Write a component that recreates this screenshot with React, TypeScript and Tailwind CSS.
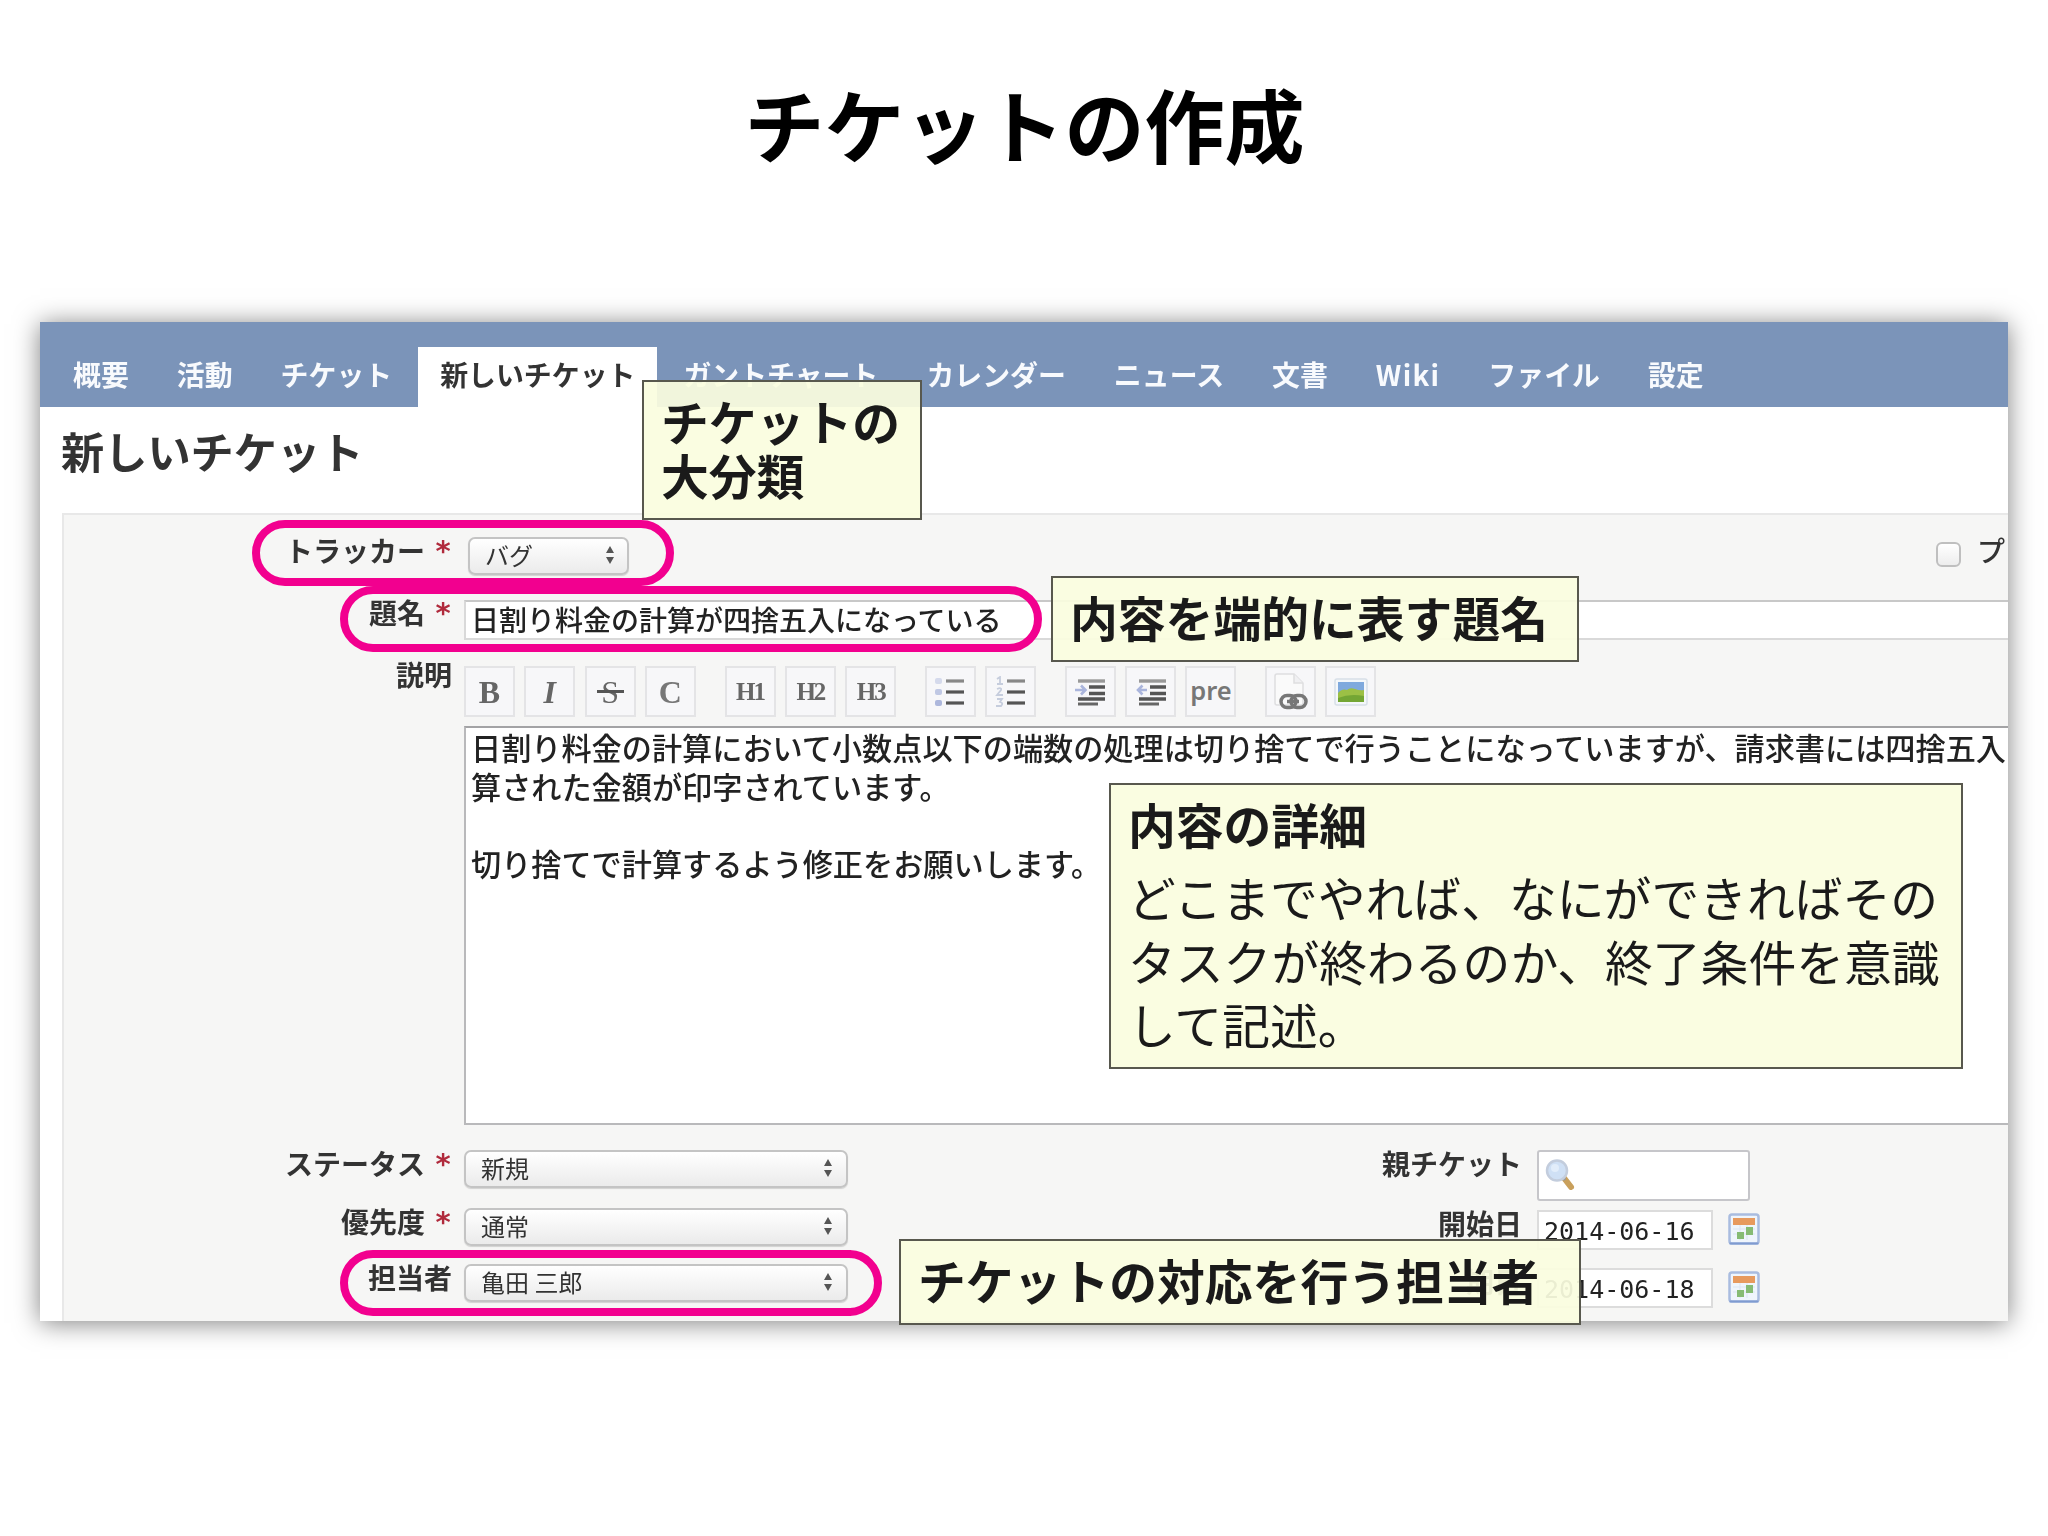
import React from "react";

type Children = { children?: React.ReactNode };

const tabs = [
  "概要",
  "活動",
  "チケット",
  "新しいチケット",
  "ガントチャート",
  "カレンダー",
  "ニュース",
  "文書",
  "Wiki",
  "ファイル",
  "設定",
];

function Label({ text, required, className = "" }: { text: string; required?: boolean; className?: string }) {
  return (
    <div
      className={`flex h-7 shrink-0 justify-end whitespace-nowrap text-[28px] leading-7 font-bold text-[#333] ${className}`}
    >
      {text}
      {required && (
        <span className="ml-[9px] w-[18px] pt-[1px] text-center font-['DejaVu_Sans'] text-[29px] font-bold text-[#b02a3c]">
          *
        </span>
      )}
    </div>
  );
}

function Select({ value, className = "" }: { value: string; className?: string }) {
  return (
    <div
      className={`flex h-[38px] shrink-0 items-center justify-between rounded-[7px] border-2 border-[#c4c4c4] bg-linear-to-b from-white to-[#ebebeb] pb-[2px] pl-[15px] text-[24px] leading-none text-[#333] shadow-[0_1px_1px_rgba(0,0,0,0.15)] ${className}`}
    >
      <span className="whitespace-pre">{value}</span>
      <svg width="10" height="18" viewBox="0 0 10 18" fill="#555">
        <path d="M5 0 9 7H1zM5 18 1 11h8z" />
      </svg>
    </div>
  );
}

function Tool({ children }: Children) {
  return (
    <div className="flex size-[51px] items-center justify-center border-2 border-[#e4e4e6] bg-[#f7f7f9] font-['Liberation_Serif'] text-[27px] leading-none text-[#555]">
      {children}
    </div>
  );
}

function ListLines() {
  return (
    <g stroke="#555" strokeWidth="3.2">
      <path d="M12 5h18" stroke="#888" />
      <path d="M12 16h18" />
      <path d="M12 27h18" />
    </g>
  );
}

function BulletList() {
  return (
    <svg width="32" height="32" viewBox="0 0 32 32">
      <ListLines />
      <g fill="#d5daec">
        <rect x="1" y="2" width="7" height="6" rx="2" />
        <rect x="1" y="13" width="7" height="6" rx="2" fill="#c0c8e4" />
        <rect x="1" y="24" width="7" height="6" rx="2" fill="#adb7dc" />
      </g>
    </svg>
  );
}

function NumberList() {
  return (
    <svg width="32" height="32" viewBox="0 0 32 32">
      <ListLines />
      <g fill="none" stroke="#c6cddd" strokeWidth="1.8">
        <path d="M2 3l3-2v7M2 8h6" />
        <path d="M2 13q5-2 4 1l-4 5h6" />
        <path d="M2 23h5l-2 3q4 1 1 4H1" />
      </g>
    </svg>
  );
}

function Indent({ out }: { out?: boolean }) {
  return (
    <svg width="30" height="28" viewBox="0 0 30 28">
      <path d="M3 3h27" stroke="#999" strokeWidth="3.4" />
      <path d="M14 9h16M14 15.500h16M3 21h27" stroke="#555" strokeWidth="3.400" />
      <path d="M3 26h20" stroke="#666" strokeWidth="3" />
      <path
        d={out ? "M11 12H2M6.500 7.500 2 12l4.500 4.500" : "M0 12h10M6 7.500 10.500 12 6 16.500"}
        stroke="#aab5dc"
        strokeWidth="2.600"
        fill="none"
      />
    </svg>
  );
}

function LinkIcon() {
  return (
    <svg width="36" height="38" viewBox="0 0 36 38" fill="none">
      <path d="M2 3q0-2 2-2h17l9 9v20q0 2-2 2H4q-2 0-2-2z" fill="#fafafa" stroke="#dedee0" strokeWidth="1.500" />
      <path d="M21 1v9h9" fill="#f0f0f2" stroke="#dedee0" strokeWidth="1.500" />
      <rect x="8" y="22.500" width="15" height="12" rx="6" stroke="#777" strokeWidth="3.500" />
      <rect x="18" y="22.500" width="15" height="12" rx="6" stroke="#777" strokeWidth="3.500" />
      <path d="M14 28.500h12" stroke="#777" strokeWidth="3.500" />
    </svg>
  );
}

function ImageIcon() {
  return (
    <svg width="34" height="28" viewBox="0 0 34 28">
      <rect x="1" y="1" width="32" height="26" rx="2" fill="#f4f7fa" stroke="#d8e0e8" strokeWidth="1.500" />
      <rect x="4" y="4" width="26" height="20" fill="#7fa9dd" />
      <path d="M4 15q4-5 9-3 3-3 8-1 5 2 9 1v12H4z" fill="#9cc045" />
      <path d="M4 20q12-5 26-2v6H4z" fill="#74a634" />
    </svg>
  );
}

function SearchIcon() {
  return (
    <svg width="30" height="31" viewBox="0 0 30 31">
      <path d="m19 19 7 9" stroke="#c9a05c" strokeWidth="6" strokeLinecap="round" />
      <path d="m17 17 3 4" stroke="#999" strokeWidth="3" />
      <circle cx="12" cy="11.500" r="10" fill="#cfe0f5" stroke="#c3cddd" strokeWidth="2.500" />
      <circle cx="10" cy="9" r="4" fill="#e2edfa" />
    </svg>
  );
}

function CalendarIcon({ className = "" }: { className?: string }) {
  return (
    <svg className={`shrink-0 ${className}`} width="32" height="32" viewBox="0 0 32 32">
      <rect x="1.500" y="1.500" width="29" height="29" rx="2.500" fill="#eff5fc" stroke="#a9bcdf" strokeWidth="2.500" />
      <path d="M1.500 30.500h29" stroke="#7f9bd0" strokeWidth="2" />
      <rect x="5" y="5" width="22" height="7" fill="#e79a5e" />
      <path d="M5 16h22M5 21h22M12 12v15M19 12v15" stroke="#dbe5f2" strokeWidth="1" />
      <rect x="9" y="19" width="7" height="7" fill="#86bb74" />
      <rect x="18" y="14" width="7" height="8" fill="#86bb74" />
    </svg>
  );
}

function DateField({ value }: { value: string }) {
  return (
    <>
      <div className="ml-[15px] flex h-10 w-[176px] items-center border-2 border-[#dcdcdc] bg-white pt-[2px] pl-[5px] font-['DejaVu_Sans_Mono'] text-[25px] leading-none text-[#222]">
        {value}
      </div>
      <CalendarIcon className="mt-[3px] ml-[15px]" />
    </>
  );
}

function Ring({ className = "" }: { className?: string }) {
  return <div className={`absolute h-[66px] rounded-[33px] border-8 border-[#f2008f] ${className}`} />;
}

function Callout({ className = "", children }: Children & { className?: string }) {
  return (
    <div
      className={`absolute border-2 border-[#58584e] bg-[#fafddf]/[0.93] text-[47.8px] font-bold whitespace-nowrap text-[#1a1a1a] ${className}`}
    >
      {children}
    </div>
  );
}

function Screen() {
  return (
    <div className="h-full overflow-hidden bg-white">
      <nav className="h-[85px] bg-[#7b94b9]">
        <div className="flex h-[85px] items-end gap-1 pl-[11px] text-[27.9px] leading-none font-bold text-[#f8fafd] blur-[0.5px]">
          {tabs.map((tab) => (
            <div
              key={tab}
              className={
                tab === "新しいチケット"
                  ? "h-[60px] bg-white px-[22px] pt-[14px] text-[#333]"
                  : tab === "Wiki"
                    ? "h-[60px] px-[22px] pt-[14px] tracking-[1.3px]"
                    : "h-[60px] px-[22px] pt-[14px]"
              }
            >
              {tab}
            </div>
          ))}
        </div>
      </nav>

      <div className="blur-[0.5px]">
        <h2 className="h-[106px] pt-[20px] pl-[21px] text-[43.2px] leading-[46px] font-bold text-[#333]">
          新しいチケット
        </h2>

        <div className="ml-[22px] h-[820px] w-[2100px] border-2 border-[#e8e8e8] bg-[#f6f6f5]">
          <div className="flex h-[85px] w-[1944px]">
            <Label text="トラッカー" required className="mt-[21px] w-[388px]" />
            <Select value="バグ" className="mt-[22px] ml-[16px] w-[161px] pr-[12px]" />
            <div className="ml-auto flex items-start pt-[27px]">
              <div className="size-[25px] rounded-[6px] border-2 border-[#bfbfbf] bg-linear-to-b from-white to-[#ededed]" />
              <span className="-mt-[6px] ml-[16px] w-[31px] text-[28px] leading-7 font-medium text-[#333]">プ</span>
            </div>
          </div>

          <div className="flex h-[66px]">
            <Label text="題名" required className="-mt-[2px] w-[388px]" />
            <div className="ml-[12px] flex h-[40px] flex-1 items-center border-2 border-[#d9d9d9] border-t-[#c8c8c8] bg-white pb-[3px] pl-[5px] text-[28px] leading-none font-medium text-[#222]">
              日割り料金の計算が四捨五入になっている
            </div>
          </div>

          <div className="flex h-[459px]">
            <Label text="説明" className="-mt-[6px] w-[388px]" />
            <div className="ml-[12px] flex flex-1 flex-col">
              <div className="flex h-[60px] gap-[28.7px]">
                <div className="flex gap-[9.3px]">
                  <Tool>
                    <span className="text-[32px] font-bold text-[#666]">B</span>
                  </Tool>
                  <Tool>
                    <span className="text-[32px] font-bold text-[#666] italic">I</span>
                  </Tool>
                  <Tool>
                    <span className="flex items-center text-[32px] text-[#666]">
                      <span>S</span>
                      <span className="-mr-[5px] -ml-[22px] h-[3px] w-[27px] bg-[#555]" />
                    </span>
                  </Tool>
                  <Tool>
                    <span className="text-[32px] font-bold text-[#777]">C</span>
                  </Tool>
                </div>
                <div className="flex gap-[9.3px]">
                  {["H1", "H2", "H3"].map((h) => (
                    <Tool key={h}>
                      <span className="text-[25px] font-bold tracking-[-2px] text-[#666]">{h}</span>
                    </Tool>
                  ))}
                </div>
                <div className="flex gap-[9.3px]">
                  <Tool>
                    <BulletList />
                  </Tool>
                  <Tool>
                    <NumberList />
                  </Tool>
                </div>
                <div className="flex gap-[9.3px]">
                  <Tool>
                    <Indent />
                  </Tool>
                  <Tool>
                    <Indent out />
                  </Tool>
                  <Tool>
                    <span className="-mt-[2px] font-['Noto_Sans'] text-[25.5px] font-semibold text-[#777]">pre</span>
                  </Tool>
                </div>
                <div className="flex gap-[9.3px]">
                  <Tool>
                    <LinkIcon />
                  </Tool>
                  <Tool>
                    <ImageIcon />
                  </Tool>
                </div>
              </div>
              <div className="flex-1 border-[2.5px] border-[#b9b9bb] border-t-[#a3a3a5] bg-white pl-[5px] text-[30.17px] leading-[38.8px] font-medium whitespace-pre text-[#222]">
                <p>日割り料金の計算において小数点以下の端数の処理は切り捨てで行うことになっていますが、請求書には四捨五入</p>
                <p>算された金額が印字されています。</p>
                <p>&nbsp;</p>
                <p>切り捨てで計算するよう修正をお願いします。</p>
              </div>
            </div>
          </div>

          <div className="flex pt-[25px]">
            <div className="flex w-[784px] flex-col">
              <div className="flex h-[58px]">
                <Label text="ステータス" required className="-mt-[1px] w-[388px]" />
                <Select value="新規" className="ml-[12px] w-[384px] pr-[13px]" />
              </div>
              <div className="flex h-[56px]">
                <Label text="優先度" required className="-mt-[1px] w-[388px]" />
                <Select value="通常" className="ml-[12px] w-[384px] pr-[13px]" />
              </div>
              <div className="flex h-[56px]">
                <Label text="担当者" className="-mt-[1px] w-[388px]" />
                <Select value="亀田 三郎" className="ml-[12px] w-[384px] pr-[13px]" />
              </div>
            </div>
            <div className="flex flex-col">
              <div className="flex h-[60px] items-start">
                <Label text="親チケット" className="-mt-[1px] w-[674px]" />
                <div className="ml-[15px] h-[51px] w-[213px] rounded-[3px] border-[2.5px] border-[#c6c6ca] bg-white pt-[7px] pl-[6px]">
                  <SearchIcon />
                </div>
              </div>
              <div className="flex h-[58px] items-start">
                <Label text="開始日" className="-mt-[1px] w-[674px]" />
                <DateField value="2014-06-16" />
              </div>
              <div className="flex h-[58px] items-start">
                <Label text="期日" className="-mt-[1px] w-[674px]" />
                <DateField value="2014-06-18" />
              </div>
            </div>
          </div>
        </div>
      </div>
    </div>
  );
}

export default function App() {
  return (
    <main className="h-[1536px] w-[2048px] overflow-hidden bg-white font-['Noto_Sans_CJK_JP',sans-serif]">
      <h1 className="h-[322px] pt-[82px] pl-[1px] text-center text-[80px] leading-[80px] font-bold text-black">
        チケットの作成
      </h1>
      <section className="relative ml-[40px] h-[999px] w-[1968px] shadow-[0_2px_24px_rgba(0,0,0,0.5)]">
        <Screen />

        <Ring className="top-[198px] left-[212px] w-[422px]" />
        <Ring className="top-[264px] left-[300px] w-[702px]" />
        <Ring className="top-[928px] left-[300px] w-[542px]" />

        <Callout className="top-[58px] left-[602px] h-[140px] w-[280px] pt-[12px] pl-[17px] leading-[54px]">
          チケットの
          <br />
          大分類
        </Callout>
        <Callout className="top-[254px] left-[1011px] h-[86px] w-[528px] pt-[12px] pl-[17px] leading-[54px]">
          内容を端的に表す題名
        </Callout>
        <Callout className="top-[461px] left-[1069px] h-[286px] w-[854px] pt-[12px] pl-[17px]">
          <p className="leading-[54px]">内容の詳細</p>
          <p className="mt-[14px] leading-[63.500px] font-normal">
            どこまでやれば、なにができればその
            <br />
            タスクが終わるのか、終了条件を意識
            <br />
            して記述。
          </p>
        </Callout>
        <Callout className="top-[917px] left-[859px] h-[86px] w-[682px] pt-[12px] pl-[17px] leading-[54px]">
          チケットの対応を行う担当者
        </Callout>
      </section>
    </main>
  );
}
